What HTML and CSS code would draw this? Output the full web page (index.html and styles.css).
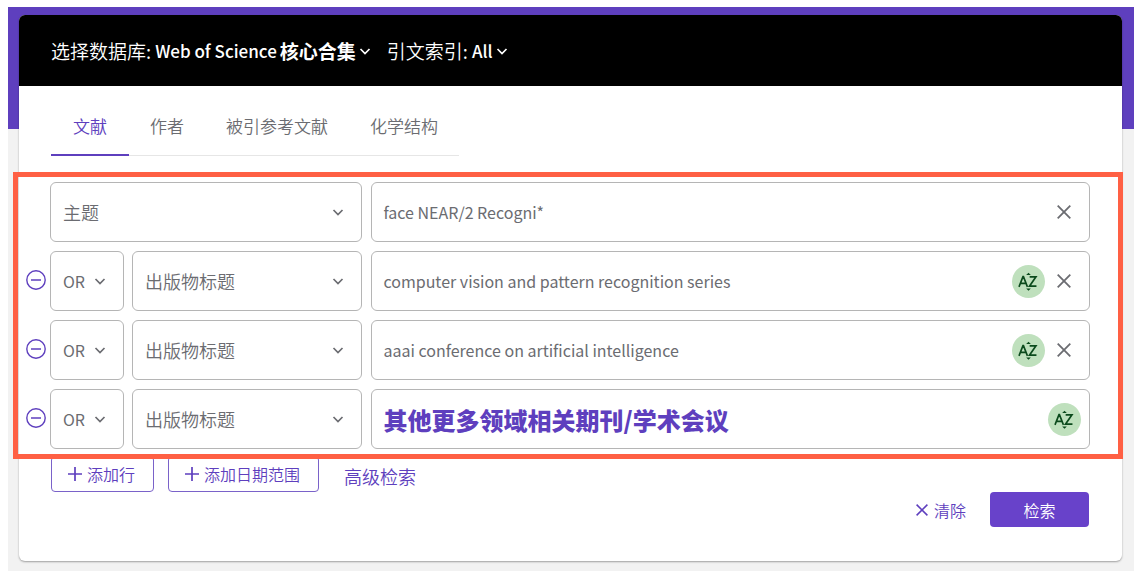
FILE: index.html
```html
<!DOCTYPE html>
<html lang="zh-CN">
<head>
<meta charset="utf-8">
<meta name="viewport" content="width=device-width, initial-scale=1">
<title>Web of Science 检索</title>
<link rel="stylesheet" href="styles.css">
</head>
<body>
<svg class="sprite" aria-hidden="true">
  <symbol id="chevron" viewBox="0 0 12 12"><path d="M1.500 4L6 8.500 10.500 4" fill="none" stroke="currentColor" stroke-width="1.7"/></symbol>
  <symbol id="close" viewBox="0 0 14 14"><path d="M.7.7l12.600 12.600M13.300.7L.7 13.300" fill="none" stroke="currentColor" stroke-width="1.8"/></symbol>
  <symbol id="plus" viewBox="0 0 14 14"><path d="M7 0v14M0 7h14" fill="none" stroke="currentColor" stroke-width="1.7"/></symbol>
  <symbol id="minus" viewBox="0 0 20 20"><circle cx="10" cy="10" r="9.2" fill="none" stroke="currentColor" stroke-width="1.4"/><path d="M5 10h10" fill="none" stroke="currentColor" stroke-width="1.5"/></symbol>
  <symbol id="az" viewBox="0 0 34 34"><path d="M7.200 22.500L11.300 12h.5l4.100 10.500M8.600 19h5.900M18.200 12.200h6.500L18 21.800h7.200" fill="none" stroke="currentColor" stroke-width="1.700"/><path d="M14.600 10.200L17 8l2.400 2.200zM14.600 24.300L17 26.500l2.400-2.200z" fill="currentColor"/></symbol>
</svg>
<div class="page">
  <main class="card">
    <header class="sources">
      <div class="source"><span id="db">选择数据库:</span><button type="button" class="source-pick" aria-describedby="db"><span>Web of Science</span><span class="han">核心合集</span><svg class="chevron"><use href="#chevron"/></svg></button></div>
      <div class="source"><span id="index">引文索引:</span><button type="button" class="source-pick" aria-describedby="index"><span>All</span><svg class="chevron"><use href="#chevron"/></svg></button></div>
    </header>

    <div class="content">
      <nav class="tabs">
        <a class="tab active" href="#documents" aria-current="page">文献</a>
        <a class="tab" href="#authors">作者</a>
        <a class="tab" href="#cited">被引参考文献</a>
        <a class="tab" href="#structure">化学结构</a>
      </nav>

      <form class="search">
        <div class="rows">
          <div class="row">
            <div class="criteria">
              <label class="pick field"><select aria-label="检索字段"><option>主题</option></select><svg class="chevron"><use href="#chevron"/></svg></label>
            </div>
            <div class="query">
              <input type="text" aria-label="检索词" value="face NEAR/2 Recogni*">
              <button type="button" class="clear" aria-label="清除检索词"><svg><use href="#close"/></svg></button>
            </div>
          </div>
          <div class="row">
            <button type="button" class="remove" aria-label="删除行"><svg><use href="#minus"/></svg></button>
            <div class="criteria">
              <label class="pick operator"><select aria-label="运算符"><option>OR</option></select><svg class="chevron"><use href="#chevron"/></svg></label>
              <label class="pick field"><select aria-label="检索字段"><option>出版物标题</option></select><svg class="chevron"><use href="#chevron"/></svg></label>
            </div>
            <div class="query">
              <input type="text" aria-label="检索词" value="computer vision and pattern recognition series">
              <button type="button" class="browse" aria-label="从索引中选择"><svg><use href="#az"/></svg></button>
              <button type="button" class="clear" aria-label="清除检索词"><svg><use href="#close"/></svg></button>
            </div>
          </div>
          <div class="row">
            <button type="button" class="remove" aria-label="删除行"><svg><use href="#minus"/></svg></button>
            <div class="criteria">
              <label class="pick operator"><select aria-label="运算符"><option>OR</option></select><svg class="chevron"><use href="#chevron"/></svg></label>
              <label class="pick field"><select aria-label="检索字段"><option>出版物标题</option></select><svg class="chevron"><use href="#chevron"/></svg></label>
            </div>
            <div class="query">
              <input type="text" aria-label="检索词" value="aaai conference on artificial intelligence">
              <button type="button" class="browse" aria-label="从索引中选择"><svg><use href="#az"/></svg></button>
              <button type="button" class="clear" aria-label="清除检索词"><svg><use href="#close"/></svg></button>
            </div>
          </div>
          <div class="row">
            <button type="button" class="remove" aria-label="删除行"><svg><use href="#minus"/></svg></button>
            <div class="criteria">
              <label class="pick operator"><select aria-label="运算符"><option>OR</option></select><svg class="chevron"><use href="#chevron"/></svg></label>
              <label class="pick field"><select aria-label="检索字段"><option>出版物标题</option></select><svg class="chevron"><use href="#chevron"/></svg></label>
            </div>
            <div class="query last">
              <input type="text" class="note" aria-label="检索词" value="其他更多领域相关期刊/学术会议">
              <button type="button" class="browse" aria-label="从索引中选择"><svg><use href="#az"/></svg></button>
            </div>
          </div>
          <div class="highlight"></div>
        </div>

        <div class="tools">
          <button type="button" class="outline"><svg><use href="#plus"/></svg>添加行</button>
          <button type="button" class="outline"><svg><use href="#plus"/></svg>添加日期范围</button>
          <a class="advanced" href="#advanced">高级检索</a>
        </div>
        <div class="submit">
          <button type="reset" class="reset"><svg><use href="#close"/></svg>清除</button>
          <button type="submit" class="go">检索</button>
        </div>
      </form>
    </div>
  </main>
</div>
</body>
</html>
```
FILE: styles.css
```css
* { box-sizing: border-box; }
body {
  margin: 0;
  padding: 7px 9px 7px 8px;
  background: #fff;
  color: #6b6c71;
  font-family: "Noto Sans CJK SC", sans-serif;
  font-size: 16px;
  font-weight: 350;
}
button, input, select { font: inherit; color: inherit; }
button { padding: 0; border: 0; background: none; cursor: pointer; }
a { text-decoration: none; }
svg { display: block; flex: none; }
.sprite { display: none; }

.page {
  padding: 8px 12px 10px 11px;
  background: linear-gradient(#5e3fbe 122px, #f2f2f2 122px);
}
.card {
  border-radius: 6px;
  background: #fff;
  box-shadow: 0 1px 2px rgba(0, 0, 0, .35);
}
.sources {
  display: flex;
  gap: 16px;
  height: 71px;
  padding: 0 32px;
  border-radius: 6px 6px 0 0;
  background: #000;
  color: #fff;
  font-size: 19px;
  align-items: center;
}
.source { display: flex; align-items: center; gap: 4px; }
.source-pick { display: flex; align-items: center; gap: 3px; font-size: 17px; font-weight: 500; }
.han { font-size: 19px; font-weight: 700; }
.chevron { width: 12px; height: 12px; }

.content { padding: 0 32px 34px; }
.tabs { display: flex; width: fit-content; border-bottom: 1px solid #e6e6e6; }
.tab {
  height: 70px;
  margin-bottom: -1px;
  padding: 0 21px;
  line-height: 80px;
  font-size: 17px;
  color: #6b6c71;
}
.tab.active { padding: 0 22px; border-bottom: 2px solid #5e3fbe; color: #5e3fbe; }

.rows {
  position: relative;
  display: flex;
  flex-direction: column;
  gap: 9px;
  padding-top: 26px;
  margin: 0 0 0 -1px;
}
.row {
  position: relative;
  display: grid;
  grid-template-columns: minmax(0, 10fr) minmax(0, 23fr);
  gap: 9px;
  height: 60px;
}
.remove { position: absolute; left: -24px; top: 19px; color: #5e3fbe; }
.remove svg { width: 20px; height: 20px; }
.criteria { display: flex; gap: 8px; }
.pick, .query { border: 1px solid #b5b5b5; border-radius: 6px; }
.pick { display: grid; align-items: center; }
.pick select {
  grid-area: 1 / 1;
  width: 100%;
  height: 100%;
  padding: 0 12px;
  border: 0;
  background: none;
  appearance: none;
  font-size: 18px;
}
.pick .chevron { grid-area: 1 / 1; justify-self: end; margin-right: 17px; pointer-events: none; }
.operator { width: 74px; }
.operator select { font-size: 16px; font-weight: 400; }
.field { flex: 1; }
.query { display: flex; align-items: center; gap: 12px; padding: 0 18px 0 11px; }
.query.last { padding-right: 8px; }
.query input { flex: 1; min-width: 0; height: 100%; padding: 0; border: 0; outline: 0; background: none; font-weight: 400; }
.query .note { color: #5e3fbe; font-size: 24px; font-weight: 900; }
.clear svg { width: 14px; height: 14px; }
.browse { border-radius: 50%; background: #bfe0bd; color: #0b4a1c; }
.browse svg { width: 33px; height: 33px; }
.highlight {
  position: absolute;
  inset: 16px -33px -10px -37px;
  border: 5px solid #ff6044;
  pointer-events: none;
}

.tools { display: flex; gap: 14px; padding-top: 7px; color: #5e3fbe; }
.outline {
  display: flex;
  align-items: center;
  gap: 5px;
  height: 36px;
  padding: 0 18px 0 16px;
  border: 1px solid #7a62c9;
  border-radius: 4px;
}
.outline svg { width: 14px; height: 14px; }
.advanced { margin-left: 11px; color: inherit; font-size: 18px; line-height: 40px; height: 36px; }
.submit { display: flex; justify-content: flex-end; align-items: center; gap: 24px; padding-right: 1px; }
.reset { display: flex; align-items: center; gap: 6px; color: #5e3fbe; }
.reset svg { width: 12px; height: 12px; }
.go { width: 99px; height: 35px; border-radius: 4px; background: #6842ca; color: #fff; }
```
